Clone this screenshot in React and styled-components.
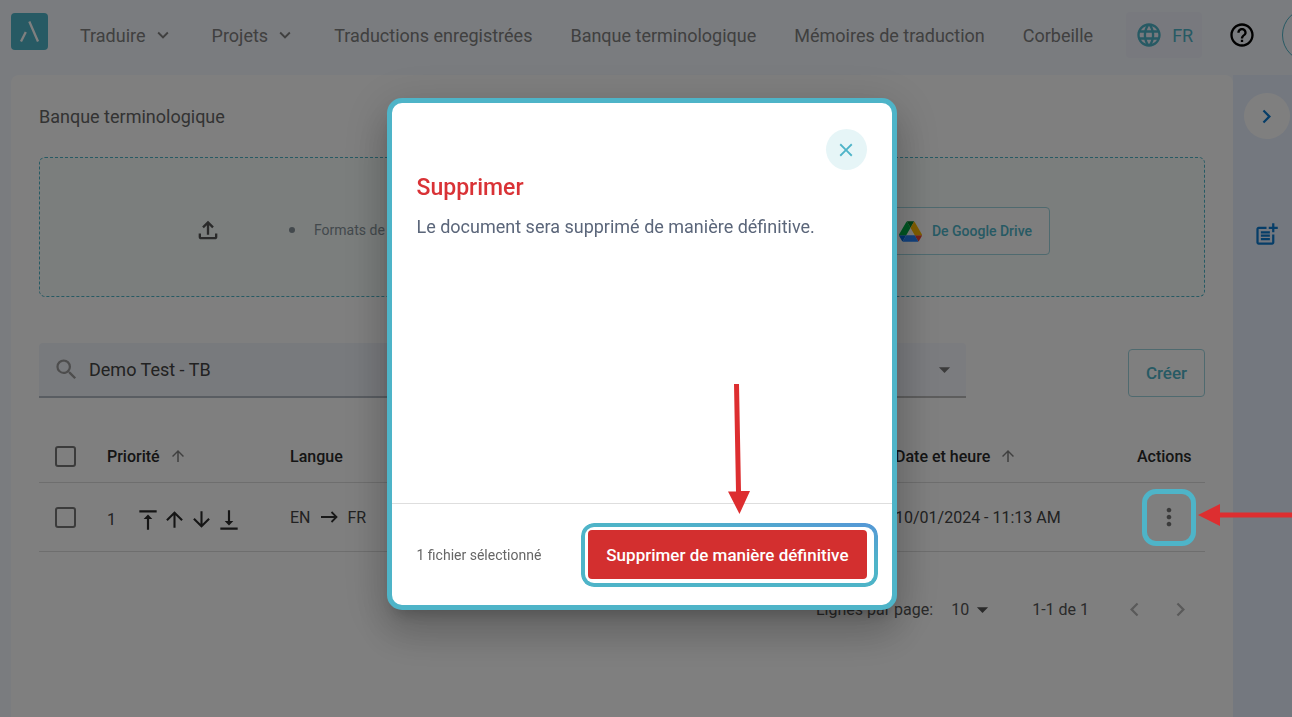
import React from 'react'
import styled, { createGlobalStyle } from 'styled-components';
import {
  MdArrowDownward,
  MdArrowDropDown,
  MdArrowUpward,
  MdChevronLeft,
  MdChevronRight,
  MdClose,
  MdExpandMore,
  MdHelpOutline,
  MdLanguage,
  MdMoreVert,
  MdOutlineFileUpload,
  MdPostAdd,
  MdSearch,
  MdVerticalAlignBottom,
  MdVerticalAlignTop,
} from 'react-icons/md';

const navItems = [
  { label: 'Traduire', menu: true },
  { label: 'Projets', menu: true },
  { label: 'Traductions enregistrées' },
  { label: 'Banque terminologique' },
  { label: 'Mémoires de traduction' },
  { label: 'Corbeille' },
];

const rows = [
  { id: 1, from: 'EN', to: 'FR', date: '10/01/2024 - 11:13 AM' },
];

function Header() {
  return (
    <TopBar>
      <Logo href="#" aria-label="Accueil">
        <svg width="37" height="37" viewBox="0 0 37 37" fill="none" stroke="#fff" strokeWidth="2.300">
          <path d="M18.300 8.500L27 28.500M10 28.500l4.800-9.500" />
        </svg>
      </Logo>
      <Nav>
        {navItems.map((item) => item.menu ? (
          <NavButton key={item.label} type="button">
            {item.label}
            <MdExpandMore size={22} />
          </NavButton>
        ) : (
          <NavLink key={item.label} href="#">{item.label}</NavLink>
        ))}
      </Nav>
      <LangButton type="button">
        <MdLanguage size={28} />
        FR
      </LangButton>
      <HelpButton type="button" aria-label="Aide">
        <MdHelpOutline size={28} />
      </HelpButton>
      <Avatar type="button" aria-label="Compte" />
    </TopBar>
  )
}

function DriveLogo() {
  return (
    <svg width="23" height="21" viewBox="0 0 87.3 78" aria-hidden="true">
      <path d="m6.600 66.850 3.850 6.650c.8 1.400 1.950 2.500 3.300 3.300l13.750-23.800h-27.500c0 1.550.4 3.100 1.200 4.500z" fill="#0066da" />
      <path d="m43.650 25-13.750-23.800c-1.350.8-2.500 1.900-3.300 3.300l-25.400 44a9.060 9.060 0 0 0 -1.200 4.500h27.500z" fill="#00ac47" />
      <path d="m73.550 76.800c1.350-.8 2.500-1.900 3.300-3.300l1.600-2.750 7.650-13.250c.8-1.400 1.200-2.950 1.200-4.500h-27.500l5.850 11.500z" fill="#ea4335" />
      <path d="m43.650 25 13.750-23.800c-1.350-.8-2.900-1.200-4.500-1.200h-18.500c-1.600 0-3.150.45-4.500 1.200z" fill="#00832d" />
      <path d="m59.800 53h-32.300l-13.750 23.800c1.350.8 2.900 1.200 4.500 1.200h50.800c1.600 0 3.150-.45 4.500-1.200z" fill="#2684fc" />
      <path d="m73.400 26.500-12.700-22c-.8-1.400-1.950-2.500-3.300-3.300l-13.750 23.800 16.150 28h27.450c0-1.550-.4-3.100-1.200-4.500z" fill="#ffba00" />
    </svg>
  )
}

function GlossaryTable() {
  return (
    <Table>
      <colgroup>
        <Col $w={52} />
        <Col $w={183} />
        <Col />
        <Col $w={242} />
        <Col $w={84} />
      </colgroup>
      <thead>
        <tr>
          <Th><Checkbox type="checkbox" aria-label="Tout sélectionner" /></Th>
          <Th><CellLine $gap={9}>Priorité <SortArrow size={18} /></CellLine></Th>
          <Th>Langue</Th>
          <Th><CellLine $gap={9}>Date et heure <SortArrow size={18} /></CellLine></Th>
          <Th>Actions</Th>
        </tr>
      </thead>
      <tbody>
        {rows.map((row) => (
          <tr key={row.id}>
            <Td><Checkbox type="checkbox" aria-label="Sélectionner la ligne" /></Td>
            <Td>
              <Priority>
                <PriorityValue>{row.id}</PriorityValue>
                <OrderButton type="button" aria-label="Tout en haut"><MdVerticalAlignTop size={26} /></OrderButton>
                <OrderButton type="button" aria-label="Monter"><MdArrowUpward size={25} /></OrderButton>
                <OrderButton type="button" aria-label="Descendre"><MdArrowDownward size={25} /></OrderButton>
                <OrderButton type="button" aria-label="Tout en bas"><MdVerticalAlignBottom size={26} /></OrderButton>
              </Priority>
            </Td>
            <Td>
              <CellLine $gap={10}>
                {row.from}
                <svg width="17" height="14" viewBox="0 0 17 14" fill="none" stroke="#333" strokeWidth="1.800">
                  <path d="M0 7h16M10.500 2L15.500 7l-5 5" />
                </svg>
                {row.to}
              </CellLine>
            </Td>
            <Td>{row.date}</Td>
            <Td>
              <ActionSpot>
                <MoreButton type="button" aria-label="Plus d'actions"><MdMoreVert size={28} /></MoreButton>
                <SpotRing />
                <ArrowLeft width="94" height="24" viewBox="0 0 94 24" fill="#dd2e30">
                  <path d="M0 12L22 1v8.500h72v5H22V23z" />
                </ArrowLeft>
              </ActionSpot>
            </Td>
          </tr>
        ))}
      </tbody>
    </Table>
  )
}

function DeleteDialog() {
  return (
    <Backdrop>
      <Dialog role="dialog" aria-modal="true" aria-labelledby="delete-title">
        <DialogBody>
          <CloseButton type="button" aria-label="Fermer"><MdClose size={22} /></CloseButton>
          <DialogTitle id="delete-title">Supprimer</DialogTitle>
          <DialogText>Le document sera supprimé de manière définitive.</DialogText>
        </DialogBody>
        <DialogFooter>
          <FileCount>1 fichier sélectionné</FileCount>
          <ConfirmSpot>
            <ConfirmButton type="button">Supprimer de manière définitive</ConfirmButton>
            <ArrowDown width="24" height="130" viewBox="0 0 24 130" fill="#dd2e30">
              <path d="M7 0h5l2 107h9L12.500 130L1 107.500h8z" />
            </ArrowDown>
          </ConfirmSpot>
        </DialogFooter>
      </Dialog>
    </Backdrop>
  )
}

function App() {
  return (
    <Page>
      <GlobalStyle />
      <Header />
      <Main>
        <Panel>
          <PageTitle>Banque terminologique</PageTitle>
          <DropZone>
            <UploadIcon size={28} />
            <Formats>
              <FormatItem>Formats de</FormatItem>
            </Formats>
            <DriveButton type="button">
              <DriveLogo />
              De Google Drive
            </DriveButton>
          </DropZone>
          <Toolbar>
            <Filters>
              <SearchField>
                <MdSearch size={27} />
                <SearchInput type="text" aria-label="Rechercher" defaultValue="Demo Test - TB" />
              </SearchField>
              <SelectField>
                <FilterSelect aria-label="Langue">
                  <option value="" />
                </FilterSelect>
                <MdArrowDropDown size={27} />
              </SelectField>
            </Filters>
            <CreateButton type="button">Créer</CreateButton>
          </Toolbar>
          <GlossaryTable />
          <Pagination>
            <label htmlFor="page-size">Lignes par page:</label>
            <PageSize>
              <PageSelect id="page-size">
                <option>10</option>
              </PageSelect>
              <MdArrowDropDown size={27} />
            </PageSize>
            <Range>1-1 de 1</Range>
            <PageButton type="button" aria-label="Page précédente"><MdChevronLeft size={27} /></PageButton>
            <PageButton type="button" aria-label="Page suivante"><MdChevronRight size={27} /></PageButton>
          </Pagination>
        </Panel>
        <SideRail>
          <RailToggle type="button" aria-label="Ouvrir le panneau"><MdChevronRight size={27} /></RailToggle>
          <RailButton type="button" aria-label="Ajouter une note"><MdPostAdd size={27} /></RailButton>
        </SideRail>
      </Main>
      <DeleteDialog />
    </Page>
  )
}

export default App

const GlobalStyle = createGlobalStyle`
* {
  box-sizing: border-box;
}
body {
  margin: 0;
  font-family: Roboto, "Liberation Sans", sans-serif;
  color: #444;
  background: #f5f8fe;
}
button, input, select {
  font-family: inherit;
  color: inherit;
  margin: 0;
}
button {
  display: flex;
  align-items: center;
  justify-content: center;
  padding: 0;
  border: none;
  background: none;
  cursor: pointer;
}
svg {
  flex: none;
  display: block;
}
`

const Page = styled.div`
min-height: 100vh;
display: flex;
flex-direction: column;
overflow: hidden;
`

const TopBar = styled.header`
display: flex;
align-items: flex-start;
height: 75px;
padding: 12px 0 0 11px;
overflow: hidden;
white-space: nowrap;
`

const Logo = styled.a`
flex: none;
margin-top: 1px;
border-radius: 4px;
background: #4eb4c8;
`

const Nav = styled.nav`
display: flex;
align-items: center;
gap: 38px;
height: 46px;
margin-left: 32px;
color: #808080;
font-size: 18px;
`

const NavButton = styled.button`
gap: 6px;
font-size: 18px;
svg {
  stroke: currentColor;
}
`

const NavLink = styled.a`
color: inherit;
text-decoration: none;
`

const LangButton = styled.button`
flex: none;
gap: 9px;
width: 76px;
height: 46px;
margin-left: 33px;
border-radius: 4px;
background: #f0f3fd;
color: #4eb4c8;
font-size: 18px;
`

const HelpButton = styled.button`
flex: none;
height: 46px;
margin-left: 26px;
color: #000;
`

const Avatar = styled.button`
flex: none;
width: 54px;
height: 54px;
margin: -4px 0 0 26px;
border: 1px solid #4eb4c8;
border-radius: 50%;
`

const Main = styled.main`
flex: 1;
display: flex;
padding-left: 11px;
`

const Panel = styled.section`
flex: 1;
min-width: 0;
padding: 28px;
border-radius: 8px 8px 0 0;
background: #fff;
`

const PageTitle = styled.h1`
margin: 0 0 26px;
font-size: 18px;
line-height: 28px;
font-weight: 400;
color: #666;
`

const DropZone = styled.div`
display: flex;
align-items: center;
height: 140px;
padding: 5px 154px 0 154px;
border: 1px dashed #4eb4c8;
border-radius: 6px;
background: #f6fcfa;
`

const UploadIcon = styled(MdOutlineFileUpload)`
color: #555;
`

const Formats = styled.ul`
margin: 0 0 0 67px;
padding: 0;
list-style: none;
font-size: 14px;
line-height: 20px;
color: #87939b;
`

const FormatItem = styled.li`
display: flex;
align-items: center;
gap: 19px;
&::before {
  content: "";
  width: 6px;
  height: 6px;
  border-radius: 50%;
  background: #87939b;
}
`

const DriveButton = styled.button`
gap: 10px;
height: 48px;
margin: 3px 0 0 auto;
padding: 0 17px;
border: 1px solid #9fd5df;
border-radius: 4px;
background: #fcfcfc;
color: #4eb4c8;
font-size: 14px;
font-weight: 500;
`

const Toolbar = styled.div`
display: flex;
align-items: flex-end;
gap: 162px;
margin-top: 46px;
`

const Filters = styled.div`
flex: 1;
display: flex;
gap: 24px;
`

const Field = styled.div`
flex: 1;
display: flex;
align-items: center;
height: 55px;
padding: 0 8px 0 14px;
border-radius: 4px 4px 0 0;
`

const SearchField = styled(Field)`
gap: 9px;
background: #f1f4fa;
border-bottom: 2px solid #b3bac4;
svg {
  color: #9a9a9a;
}
`

const SearchInput = styled.input`
flex: 1;
min-width: 0;
border: none;
outline: none;
padding: 0;
background: none;
font-size: 18px;
`

const SelectField = styled(Field)`
background: #f6f8fe;
border-bottom: 2px solid #bbb;
svg {
  color: #777;
}
`

const FilterSelect = styled.select`
flex: 1;
appearance: none;
border: none;
background: none;
font-size: 18px;
`

const CreateButton = styled.button`
width: 77px;
height: 48px;
margin-bottom: 1px;
border: 1px solid #9fd5df;
border-radius: 4px;
color: #4eb4c8;
font-size: 17px;
font-weight: 500;
`

const Table = styled.table`
width: 100%;
margin-top: 32px;
table-layout: fixed;
border-collapse: separate;
border-spacing: 0;
font-size: 16px;
white-space: nowrap;
`

const Col = styled.col`
width: ${(p) => (p.$w ? `${p.$w}px` : 'auto')};
`

const Th = styled.th`
height: 53px;
padding: 0 16px;
border-bottom: 1px solid #ddd;
text-align: left;
font-weight: 500;
color: #2a2a2a;
`

const Td = styled.td`
height: 69px;
padding: 0 16px;
border-bottom: 1px solid #ddd;
`

const CellLine = styled.div`
display: flex;
align-items: center;
gap: ${(p) => p.$gap}px;
`

const SortArrow = styled(MdArrowUpward)`
color: #808080;
`

const Checkbox = styled.input`
appearance: none;
display: block;
width: 21px;
height: 21px;
margin: 0;
border: 2px solid #777;
border-radius: 3px;
`

const Priority = styled.div`
display: flex;
align-items: center;
gap: 2px;
padding-top: 5px;
color: #2a2a2a;
`

const PriorityValue = styled.span`
width: 26px;
color: #444;
`

const OrderButton = styled.button`
width: 25px;
`

const ActionSpot = styled.div`
position: relative;
width: 54px;
height: 57px;
margin-left: 5px;
display: flex;
align-items: center;
justify-content: center;
`

const MoreButton = styled.button`
color: #777;
`

/* sits over the backdrop */
const SpotRing = styled.span`
position: absolute;
inset: 0;
z-index: 2;
border: 5px solid #4eb4c8;
border-radius: 14px;
pointer-events: none;
`

const ArrowLeft = styled.svg`
position: absolute;
left: 56px;
top: 14px;
z-index: 2;
`

const Pagination = styled.div`
display: flex;
align-items: center;
justify-content: flex-end;
height: 48px;
margin-top: 33px;
padding-right: 11px;
font-size: 16px;
color: #555;
`

const PageSize = styled.div`
display: flex;
align-items: center;
margin: 0 36px 0 18px;
`

const PageSelect = styled.select`
appearance: none;
border: none;
background: none;
padding: 0;
font-size: 16px;
`

const Range = styled.span`
margin-right: 32px;
`

const PageButton = styled.button`
color: #b4b4b4;
& + & {
  margin-left: 19px;
}
`

const SideRail = styled.aside`
flex: none;
display: flex;
flex-direction: column;
align-items: center;
gap: 82px;
width: 59px;
padding: 18px 0 0 8px;
background: #e9f1fe;
`

const RailToggle = styled.button`
width: 46px;
height: 46px;
border-radius: 50%;
background: #fff;
color: #0c7bd0;
svg {
  stroke: currentColor;
}
`

const RailButton = styled.button`
color: #0c7bd0;
`

const Backdrop = styled.div`
position: fixed;
inset: 0;
z-index: 1;
display: flex;
align-items: center;
justify-content: center;
padding: 0 9px 9px 0;
background: rgba(0, 0, 0, 0.5);
`

const Dialog = styled.div`
display: flex;
flex-direction: column;
width: 510px;
height: 512px;
border: 5px solid #4eb4c8;
border-radius: 15px;
background: #fff;
box-shadow: 0 11px 15px -7px rgba(0, 0, 0, 0.2), 0 24px 38px 3px rgba(0, 0, 0, 0.14), 0 9px 46px 8px rgba(0, 0, 0, 0.12);
`

const DialogBody = styled.div`
flex: 1;
padding: 26px 25px;
`

const CloseButton = styled.button`
width: 41px;
height: 41px;
margin-left: auto;
border-radius: 50%;
background: #e6f5f7;
color: #4eb4c8;
svg {
  stroke: currentColor;
}
`

const DialogTitle = styled.h2`
margin: 2px 0 9px;
font-size: 23px;
line-height: 32px;
font-weight: 500;
color: #d93236;
`

const DialogText = styled.p`
margin: 0;
font-size: 18px;
line-height: 28px;
color: #5b667a;
`

const DialogFooter = styled.div`
display: flex;
align-items: center;
justify-content: space-between;
height: 102px;
padding: 0 25px;
border-top: 1px solid #dedede;
`

const FileCount = styled.span`
font-size: 14px;
color: #666;
`

const ConfirmSpot = styled.div`
position: relative;
&::before {
  content: "";
  position: absolute;
  inset: -7px -11px -8px -7px;
  padding: 4px;
  border-radius: 13px;
  background: radial-gradient(ellipse 200px 40px at 96% 0, #5598d6, #4eb4c8);
  mask: linear-gradient(#000 0 0) content-box exclude, linear-gradient(#000 0 0);
  pointer-events: none;
}
`

const ConfirmButton = styled.button`
height: 49px;
padding: 0 18px;
border-radius: 4px;
background: #d32f2f;
color: #fff;
font-size: 17px;
font-weight: 500;
`

const ArrowDown = styled.svg`
position: absolute;
right: 116px;
bottom: 65px;
`
